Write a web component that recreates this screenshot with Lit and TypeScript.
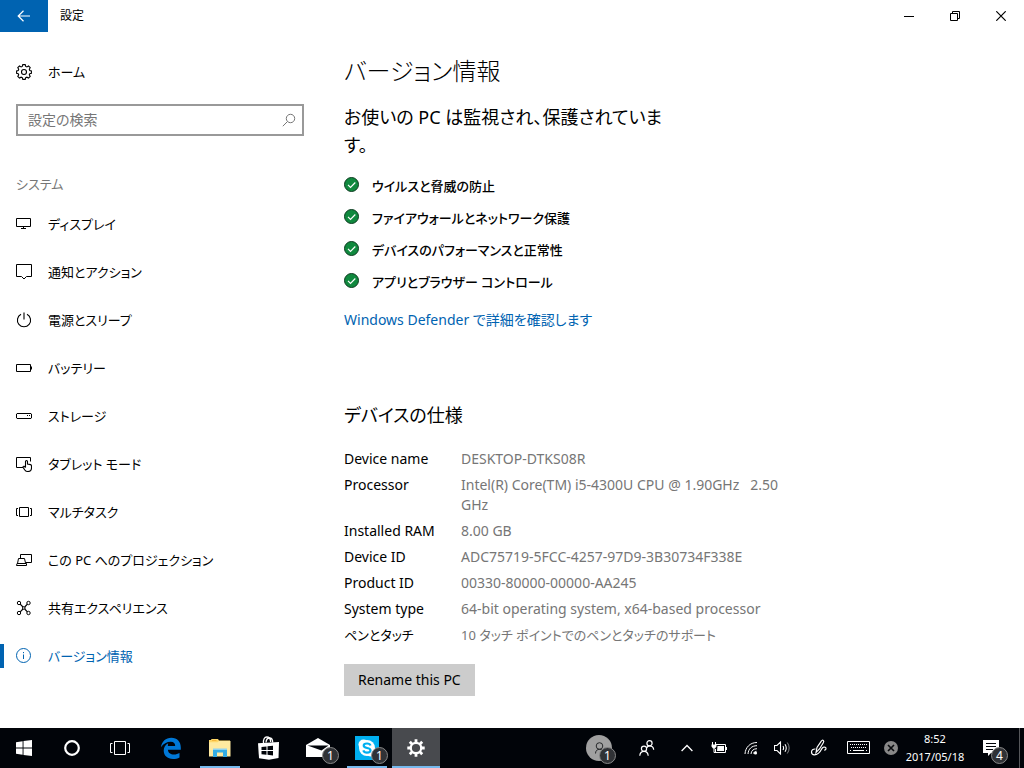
import { LitElement, html, svg, css } from "lit";
import { customElement, property } from "lit/decorators.js";
import { classMap } from "lit/directives/class-map.js";

type Icon = { w: number; h: number; body: unknown };

const icons: Record<string, Icon> = {
  back: { w: 14, h: 12, body: svg`<path d="M13 6H1.5M6.5 .8 1.2 6l5.3 5.2" stroke-width="1.2"/>` },
  minimize: { w: 10, h: 10, body: svg`<path d="M0 5.5h10"/>` },
  restore: { w: 10, h: 10, body: svg`<path d="M.5 2.5h7v7h-7zM2.5 2.500V.5h7v7h-2"/>` },
  close: { w: 10, h: 10, body: svg`<path d="m.3.3 9.400 9.400m0-9.400L.3 9.700" stroke-width="1.2"/>` },
  gear: {
    w: 16, h: 16,
    body: svg`<path d="M6.800.6h2.400l.5 1.800 1.200.5 1.600-.9 1.700 1.700-.9 1.600.5 1.200 1.600.4v2.300l-1.600.4-.5 1.200.9 1.600-1.700 1.700-1.600-.9-1.200.5-.5 1.700H6.800l-.5-1.700-1.200-.5-1.600.9-1.700-1.700.9-1.600-.5-1.200L.6 9.200V6.900l1.600-.4.5-1.200-.9-1.600L3.500 2l1.600.9 1.200-.5z" stroke-width="1.1"/><circle cx="8" cy="8" r="2.500" stroke-width="1.1"/>`,
  },
  search: { w: 14, h: 14, body: svg`<circle cx="8.500" cy="5.500" r="4.200"/><path d="M5.500 8.500.8 13.200"/>` },
  display: { w: 16, h: 16, body: svg`<path d="M.5 2.500h14v8H.5zM7.500 10.500v2M5 12.500h5"/>` },
  notify: { w: 16, h: 16, body: svg`<path d="M.5.5h15v12h-5L8 15l-2.500-2.500h-5z"/>` },
  power: { w: 16, h: 16, body: svg`<path d="M8 .5v7M5 2.300a6.600 6.600 0 1 0 6 0" stroke-width="1.1"/>` },
  battery: { w: 16, h: 16, body: svg`<path d="M.5 4.500h14v7H.5zM15.500 6.500v3"/>` },
  storage: { w: 16, h: 16, body: svg`<path d="M1 5.500h14l.5.500v4l-.5.500H1l-.5-.5V6zM11 7.500h1M13 7.500h1"/>` },
  tablet: {
    w: 16, h: 16,
    body: svg`<path d="M7 11.500H.5v-10h14v4"/><path d="M9.500 11.500V5.500q0-1 1-1t1 1V8l3 .6q1 .3 1 1.300v2q0 3.600-3.700 3.600-2 0-3-1.500L7 11.300q0-1.300 1.200-1l1.300 1.200" stroke-width="1.1"/>`,
  },
  multitask: { w: 16, h: 16, body: svg`<path d="M3.500 3.500h9v9h-9zM2 4.500H.5v7H2M14 4.500h1.500v7H14"/>` },
  project: { w: 16, h: 16, body: svg`<path d="M4.500 6V2.500h11v8H10M2.500 6.500h6l1 4.500v.5h-8zM.5 13.500h10v-2H1z"/>` },
  share: {
    w: 16, h: 16,
    body: svg`<circle cx="3" cy="3" r="1.700"/><circle cx="12.500" cy="3" r="1.700"/><circle cx="3" cy="13" r="1.700"/><circle cx="12.500" cy="13" r="1.700"/><circle cx="7.800" cy="8" r="1.300"/><path d="M4.200 4.200 7 7M11.400 4.200 8.700 7M4.200 11.800 7 9M11.400 11.800 8.700 9" stroke-width="1.200"/>`,
  },
  info: { w: 16, h: 16, body: svg`<circle cx="7.500" cy="7.500" r="7"/><path d="M7.500 6.500V11M7.500 4v1.200"/>` },
  check: {
    w: 16, h: 18,
    body: svg`<circle cx="7.500" cy="7.500" r="7" fill="#10893e" stroke="#0d3c20"/><path d="m4 7.800 2.500 2.500 4.800-4.800" stroke="#fff" stroke-width="1.200"/>`,
  },
  start: {
    w: 16, h: 16,
    body: svg`<path fill="currentColor" stroke="none" d="M0 2.200 6.600 1.300v6.300H0zM7.500 1.100 16 0v7.600H7.500zM0 8.400h6.600v6.300L0 13.800zM7.500 8.400H16V16l-8.500-1.100z"/>`,
  },
  cortana: { w: 16, h: 16, body: svg`<circle cx="8" cy="8" r="6.800" stroke-width="2.200"/>` },
  taskview: { w: 22, h: 14, body: svg`<path d="M5.500.5h11v13h-11zM3.500 2.500h-2v9h2M18.500 2.500h2v9h-2"/>` },
  edge: {
    w: 22, h: 22,
    body: svg`<path fill="#0078d7" stroke="none" d="M1 10.200C1.800 4.500 5.800.8 11.300.8c6 0 9.500 4 9.500 9.800v2.200H7.900c.2 3.200 2.700 4.700 6 4.700 2.200 0 4.200-.6 5.600-1.500v4.400c-1.800 1-4 1.500-6.500 1.500-5.700 0-9.300-3.300-9.300-8.400 0-3.300 1.700-5.800 4.500-7.200C7.900 7.300 7.900 8.500 7.900 9h7.300c0-2.700-1.400-4.300-4.400-4.300C6.800 4.700 3.400 6.600 1 10.200z"/>`,
  },
  folder: {
    w: 22, h: 18,
    body: svg`<g stroke="none"><path fill="#ffd767" d="M0 1h2l.5-1H9l1 1.500h11V6H0z"/><path fill="#ffeaa0" d="M0 3.200h8.500L10 2h11.500v15.500H0z"/><path fill="#f6b73c" d="M3 1h4.500v1H3z"/><path fill="#35aee5" d="M4 10h14v8h-4v-4.500H8V18H4z"/><path fill="#8ed3f2" d="M4 9.500h14V11H4z"/></g>`,
  },
  store: {
    w: 22, h: 24,
    body: svg`<path d="M5.500 7.500C5 3.500 6.500 1 8.800 1S12.500 3 12.700 6M8 6.500C8.200 3 9.800 2 11.500 2s3.200 1.700 3.200 4.500" stroke-width="1.300"/><path fill="currentColor" stroke="none" d="M0 7.200 21 6l-.5 16L11 23.800l-10-1.600z"/><path stroke="none" fill="#010409" d="m3.500 11 5-.5V14h-5zM9.500 10.300l5.500-.6V14H9.500zM3.500 15h5v3.700l-5-.5zM9.500 15H15v4.500l-5.500-.7z"/>`,
  },
  mail: {
    w: 24, h: 20,
    body: svg`<path fill="currentColor" stroke="none" d="M0 7 12 0l12 7v12H0z"/><path d="M1.500 7.500h21l-7 5z" fill="#010409" stroke="none"/>`,
  },
  skype: {
    w: 24, h: 24,
    body: svg`<path fill="#00aff0" stroke="none" d="M0 0h24v24H0z"/><circle cx="8.500" cy="8.500" r="5" fill="#fff" stroke="none"/><circle cx="15.500" cy="15.500" r="5" fill="#fff" stroke="none"/><circle cx="12" cy="12" r="8" fill="#fff" stroke="none"/><path stroke="#00aff0" stroke-width="2.200" d="M15.500 9.500C15 8 13.700 7.500 12 7.500c-2 0-3.300.8-3.300 2.200 0 3 6.800 1.500 6.800 4.600 0 1.500-1.500 2.300-3.500 2.300-2.100 0-3.200-.8-3.700-2.300"/>`,
  },
  cog: {
    w: 18, h: 18,
    body: svg`<circle cx="9" cy="9" r="5.200" stroke-width="2.200"/><path stroke-width="2.800" d="M9 4V.3M9 14v3.700M14 9h3.700M4 9H.3M12.800 5.200l2.400-2.400M5.200 12.800l-2.400 2.400M5.200 5.200 2.800 2.800M12.800 12.800l2.400 2.400"/>`,
  },
  avatar: {
    w: 26, h: 26,
    body: svg`<circle cx="13" cy="13" r="13" fill="#a0a0a0" stroke="none"/><g stroke="#26282a"><circle cx="13.500" cy="11" r="3.300"/><path d="M9.500 18.500c0-2.700 1.700-4.200 4-4.200s4 1.500 4 4.200"/></g>`,
  },
  people: {
    w: 16, h: 16,
    body: svg`<g stroke-width="1.200"><circle cx="10.500" cy="3.200" r="2.600"/><path d="M7.800 7.800c.5-1.300 1.500-2 2.700-2 2.500 0 4 1.500 4.200 4"/><circle cx="5" cy="8.700" r="2.600"/><path d="M.8 15.700c.2-3 1.700-4.400 4.200-4.400s4 1.500 4.200 4.400"/></g>`,
  },
  chevron: { w: 12, h: 8, body: svg`<path d="m.6 7 5.400-5.500L11.400 7" stroke-width="1.300"/>` },
  plug: {
    w: 16, h: 12,
    body: svg`<path d="M5 2.500h9.500v8h-10V7M15.500 5v3M1.500 0v3M4.500 0v3M3 6v4.500h2"/><path fill="currentColor" stroke="none" d="M.5 2.500h5v2l-1.500 2H2l-1.500-2zM6.500 4H13v5H6z"/>`,
  },
  wifi: {
    w: 14, h: 14,
    body: svg`<path d="M1 13C1.300 6.500 6 1.500 13 1.500M4 13c.3-5 3.700-8.300 9-8.300M7 13c.2-3.300 2.500-5.300 6-5.300"/><circle cx="11.500" cy="12" r="1.600" fill="currentColor" stroke="none"/><path d="M9.500 12.500c.3-1.300 1.500-2.200 3-2.200"/>`,
  },
  sound: {
    w: 18, h: 14,
    body: svg`<path d="M.5 4.500h2.500L6.500 1v12L3 9.500H.5zM9 5q1.200 2 0 4M11 3.200q2.500 3.800 0 7.600" stroke-width="1.100"/><path opacity=".5" d="M13.300 1.500q3.700 5.500 0 11"/>`,
  },
  pen: {
    w: 18, h: 18,
    body: svg`<path stroke-width="1.200" d="M6 13.500 7 8.500l4.300-6.300q1-1.500 2-.8t0 2.300L9.500 10zM5.500 10C3 9.800 1.500 11.200 1.500 13s1.200 2.800 3 2.800c4 0 5.500-2.500 7-5.500 1-2 2.500-2.600 3.700-2 1.500.8.800 3-1 2.700"/>`,
  },
  keyboard: {
    w: 24, h: 14,
    body: svg`<path d="M.5.5h22v12H.5z"/><path stroke-dasharray="1 1" d="M3 3.500h18M4 6.500h16"/><path d="M3 9.500h1M6 9.500h11M19 9.500h1"/>`,
  },
  stop: {
    w: 14, h: 14,
    body: svg`<circle cx="7" cy="7" r="7" fill="#888" stroke="none"/><path stroke="#080a0d" stroke-width="1.600" d="m4 4 6 6m0-6-6 6"/>`,
  },
  action: {
    w: 16, h: 16,
    body: svg`<path fill="currentColor" stroke="none" d="M0 0h16v13H8l-3 3v-3H0z"/><path stroke="#010409" d="M3 3.500h10M3 6.500h10M3 9.500h7"/>`,
  },
};

const icon = (name: string) => {
  const i = icons[name];
  return html`<svg class="icon" width=${i.w} height=${i.h} viewBox="0 0 ${i.w} ${i.h}" fill="none" stroke="currentColor" aria-hidden="true">${i.body}</svg>`;
};

const base = css`
  *, *::before { box-sizing: border-box; }
  button, input { font: inherit; color: inherit; border: 0; padding: 0; margin: 0; background: none; border-radius: 0; }
  a { color: inherit; text-decoration: none; }
  ul, dl, dd, dt, p, h1, h2 { margin: 0; padding: 0; font-size: inherit; font-weight: inherit; }
  ul { list-style: none; }
  .icon { display: block; flex: none; }
`;

@customElement("title-bar")
class TitleBar extends LitElement {
  static styles = [base, css`
    :host { display: flex; height: 32px; font-size: 12px; line-height: 32px; }
    .back, .win { display: grid; place-items: center; }
    .back { width: 48px; background: #0063b1; color: #fff; }
    .title { flex: 1; padding-left: 12px; }
    .win { width: 46px; }
  `];
  render() {
    return html`
      <button class="back" aria-label="戻る">${icon("back")}</button>
      <span class="title">設定</span>
      <button class="win" aria-label="最小化">${icon("minimize")}</button>
      <button class="win" aria-label="元に戻す">${icon("restore")}</button>
      <button class="win" aria-label="閉じる">${icon("close")}</button>`;
  }
}

const sections: [string, string][] = [
  ["display", "ディスプレイ"],
  ["notify", "通知とアクション"],
  ["power", "電源とスリープ"],
  ["battery", "バッテリー"],
  ["storage", "ストレージ"],
  ["tablet", "タブレット モード"],
  ["multitask", "マルチタスク"],
  ["project", "この PC へのプロジェクション"],
  ["share", "共有エクスペリエンス"],
  ["info", "バージョン情報"],
];

@customElement("settings-nav")
class SettingsNav extends LitElement {
  @property() current = "info";
  static styles = [base, css`
    :host { display: block; padding-top: 16px; font-size: 13px; }
    .item { display: flex; align-items: center; gap: 16px; height: 48px; padding-left: 16px; }
    .current { color: #0063b1; position: relative; }
    .current::before { content: ""; position: absolute; left: 0; top: 12px; width: 4px; height: 24px; background: #0063b1; }
    .search { display: flex; align-items: center; height: 32px; margin: 8px 16px 32px; border: 2px solid #999; color: #767676; padding: 0 6px 0 10px; }
    .field { flex: 1; min-width: 0; outline: 0; font-size: 14px; }
    .field::placeholder { color: #767676; opacity: 1; }
    .group { line-height: 32px; padding-left: 16px; color: #767676; }
  `];
  render() {
    return html`
      <a class="item" href="#home">${icon("gear")}<span>ホーム</span></a>
      <div class="search">
        <input class="field" type="text" aria-label="設定の検索" placeholder="設定の検索" />
        <button aria-label="検索">${icon("search")}</button>
      </div>
      <h2 class="group">システム</h2>
      <nav><ul>
        ${sections.map(([id, label]) => html`
          <li><a class=${classMap({ item: true, current: id === this.current })} href="#${id}">${icon(id)}<span>${label}</span></a></li>`)}
      </ul></nav>`;
  }
}

const checks = ["ウイルスと脅威の防止", "ファイアウォールとネットワーク保護", "デバイスのパフォーマンスと正常性", "アプリとブラウザー コントロール"];
const specs: [string, string][] = [
  ["Device name", "DESKTOP-DTKS08R"],
  ["Processor", "Intel(R) Core(TM) i5-4300U CPU @ 1.90GHz   2.50 GHz"],
  ["Installed RAM", "8.00 GB"],
  ["Device ID", "ADC75719-5FCC-4257-97D9-3B30734F338E"],
  ["Product ID", "00330-80000-00000-AA245"],
  ["System type", "64-bit operating system, x64-based processor"],
];

@customElement("about-page")
class AboutPage extends LitElement {
  static styles = [base, css`
    :host { display: block; padding: 15px 24px 32px; }
    .title { font-size: 24px; line-height: 48px; font-weight: 300; }
    .lead { font-size: 18px; line-height: 28px; max-width: 328px; margin-top: 8px; }
    .checks { margin-top: 11px; font-size: 13px; font-weight: 500; }
    .check { display: flex; align-items: center; gap: 12px; height: 32px; }
    .link { display: inline-block; line-height: 24px; margin-top: 10px; color: #0063b1; }
    .subtitle { font-size: 18px; line-height: 32px; margin-top: 67px; }
    .specs { display: grid; grid-template-columns: 117px minmax(0, 332px); row-gap: 6px; margin-top: 18px; line-height: 20px; }
    .value { color: #767676; white-space: pre-wrap; }
    .kana { font-size: 13px; }
    .rename { height: 32px; padding: 0 14px; margin-top: 19px; background: #ccc; }
  `];
  render() {
    return html`
      <h1 class="title">バージョン情報</h1>
      <p class="lead">お使いの PC は監視され、保護されています。</p>
      <ul class="checks">${checks.map((c) => html`<li class="check">${icon("check")}<span>${c}</span></li>`)}</ul>
      <a class="link" href="#defender">Windows Defender で詳細を確認します</a>
      <h2 class="subtitle">デバイスの仕様</h2>
      <dl class="specs">
        ${specs.map(([k, v]) => html`<dt>${k}</dt><dd class="value">${v}</dd>`)}
        <dt class="kana">ペンとタッチ</dt><dd class="value kana">10 タッチ ポイントでのペンとタッチのサポート</dd>
      </dl>
      <button class="rename">Rename this PC</button>`;
  }
}

type Task = { id: string; label: string; badge?: string; state?: string };
const system: Task[] = [
  { id: "start", label: "スタート" },
  { id: "cortana", label: "Cortana" },
  { id: "taskview", label: "タスク ビュー" },
];
const apps: Task[] = [
  { id: "edge", label: "Microsoft Edge" },
  { id: "folder", label: "エクスプローラー", state: "running" },
  { id: "store", label: "ストア" },
  { id: "mail", label: "メール", badge: "1" },
  { id: "skype", label: "Skype", badge: "1", state: "running" },
  { id: "cog", label: "設定", state: "active" },
];
const tray: [string, string, string][] = [
  ["people", "People", "wide"],
  ["chevron", "隠れているインジケーター", "narrow"],
  ["plug", "電源", "narrow"],
  ["wifi", "ネットワーク", "narrow"],
  ["sound", "音量", "narrow"],
  ["pen", "Windows Ink", "medium"],
  ["keyboard", "タッチ キーボード", "medium"],
  ["stop", "状態", "small"],
];

@customElement("task-bar")
class TaskBar extends LitElement {
  static styles = [base, css`
    :host { display: flex; height: 40px; background: #010409; color: #fff; font-size: 11px; }
    .task { position: relative; display: grid; place-items: center; width: 48px; height: 40px; }
    .apps { display: flex; gap: 1px; margin-left: 3px; flex: 1; }
    .running::before, .active::before { content: ""; position: absolute; bottom: 0; left: 4px; right: 4px; height: 2px; background: #76b9ed; }
    .active { background: #484a4e; }
    .active::before { left: 0; right: 0; }
    .badge { position: absolute; left: 28px; top: 19px; width: 17px; height: 17px; border: 1px solid #888; border-radius: 50%; background: #303236; font-size: 12px; line-height: 15px; text-align: center; }
    .tray .badge { left: 24px; }
    .medium { width: 40px; }
    .narrow { width: 32px; }
    .small { width: 24px; }
    .clock { width: 64px; line-height: 18px; text-align: center; }
    .desktop { width: 5px; margin-left: 4px; border-left: 1px solid #55575a; }
  `];
  private task(t: Task) {
    return html`<button class="task ${t.state ?? ""}" aria-label=${t.label}>${icon(t.id)}${t.badge ? html`<span class="badge">${t.badge}</span>` : ""}</button>`;
  }
  render() {
    return html`
      ${system.map((t) => this.task(t))}
      <div class="apps">${apps.map((t) => this.task(t))}</div>
      ${this.task({ id: "avatar", label: "連絡先", badge: "1", state: "tray" })}
      ${tray.map(([id, label, size]) => html`<button class="task ${size}" aria-label=${label}>${icon(id)}</button>`)}
      <button class="clock"><div>8:52</div><div>2017/05/18</div></button>
      ${this.task({ id: "action", label: "アクション センター", badge: "4", state: "tray" })}
      <button class="desktop" aria-label="デスクトップの表示"></button>`;
  }
}

@customElement("app-root")
class AppRoot extends LitElement {
  static styles = [base, css`
    :host {
      display: flex; flex-direction: column; min-height: 100vh; background: #fff; color: #000;
      font: 14px/20px "Noto Sans", "Noto Sans CJK JP", sans-serif;
      font-feature-settings: "palt";
    }
    .body { flex: 1; display: grid; grid-template-columns: 320px minmax(0, 1fr); }
  `];
  render() {
    return html`
      <title-bar></title-bar>
      <main class="body"><settings-nav></settings-nav><about-page></about-page></main>
      <task-bar></task-bar>`;
  }
}
